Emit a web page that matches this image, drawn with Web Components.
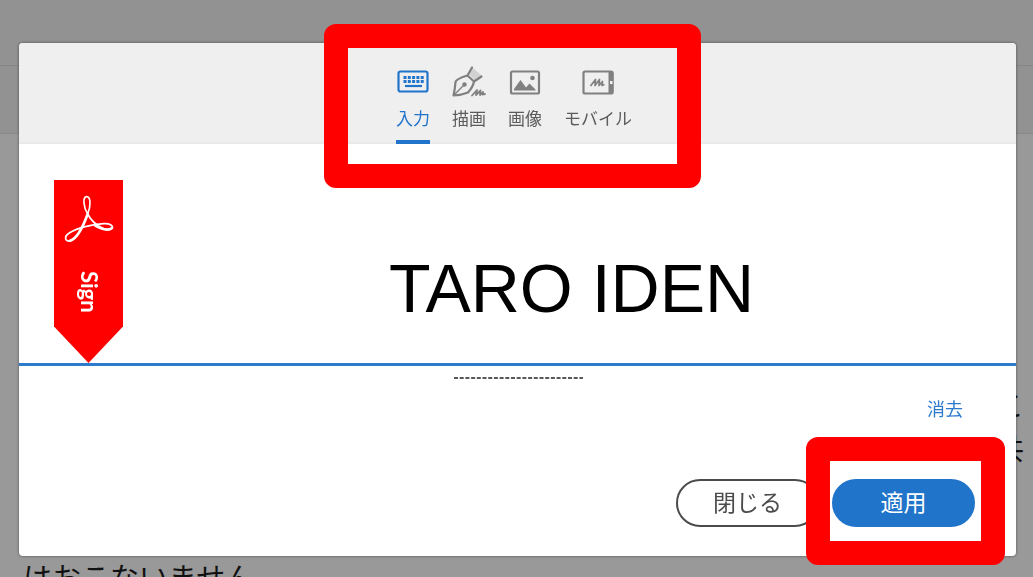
<!DOCTYPE html>
<html lang="ja">
<head>
<meta charset="utf-8">
<title>Adobe Sign</title>
<style>
body { margin: 0; height: 100vh; overflow: hidden; font-family: "Liberation Sans", "Noto Sans CJK JP", sans-serif; }
</style>
</head>
<body>
<document-page>
  <div slot="right">こ<br>共</div>
  <div slot="left">はおこないません</div>
</document-page>
<signature-dialog>
  <call-out slot="tabs" class="tabs">
    <tab-list>
      <signature-tab icon="keyboard" selected>入力</signature-tab>
      <signature-tab icon="pen">描画</signature-tab>
      <signature-tab icon="picture">画像</signature-tab>
      <signature-tab icon="mobile">モバイル</signature-tab>
    </tab-list>
  </call-out>
  <signature-field slot="field" value="TARO IDEN"></signature-field>
  <clear-link slot="clear">消去</clear-link>
  <pill-button slot="actions">閉じる</pill-button>
  <call-out slot="actions" class="apply"><pill-button primary>適用</pill-button></call-out>
</signature-dialog>
<script>
const define = (name, html, setup) => {
  const template = document.createElement('template');
  template.innerHTML = html;
  customElements.define(name, class extends HTMLElement {
    constructor() {
      super();
      this.attachShadow({ mode: 'open' }).append(template.content.cloneNode(true));
    }
    connectedCallback() { if (setup) setup(this, this.shadowRoot); }
  });
};

define('document-page', `
<style>
  :host { display: block; height: 100%; overflow: hidden; background: #999; color: #111;
    font: 29px/43px "Liberation Serif", "Noto Sans CJK JP", serif; }
  .top { height: 65px; background: #929292; }
  .bar { height: 67px; background: #929292; border-top: 1px solid #868686; border-bottom: 1px solid #888; }
  .text { padding: 252px 9px 0 23px; }
  .right { text-align: right; padding-bottom: 86px; }
</style>
<div class="top"></div><div class="bar"></div>
<div class="text"><div class="right"><slot name="right"></slot></div><slot name="left"></slot></div>`);

define('signature-dialog', `
<style>
  :host { position: fixed; inset: 0; display: flex; box-sizing: border-box; padding: 43px 17px 21px 19px; }
  section { flex: 1; display: flex; flex-direction: column; background: #fff; border-radius: 4px;
    box-shadow: 0 0 3px rgba(0,0,0,.5); }
  header { display: flex; justify-content: center; padding-right: 7px; background: #efefef;
    border-radius: 4px 4px 0 0; box-shadow: inset 0 -2px #e9e9e9; }
  .dashes { display: block; width: 131px; height: 2px; margin: 11px auto 0; }
  .clear { display: flex; justify-content: flex-end; padding: 19px 53px 0 0; }
  footer { display: flex; justify-content: flex-end; gap: 13px; margin-top: auto; padding: 0 41px 29px; }
</style>
<section role="dialog" aria-label="署名">
  <header><slot name="tabs"></slot></header>
  <slot name="field"></slot>
  <svg class="dashes" viewBox="0 0 131 2" aria-hidden="true"><path d="M2 1H131" stroke="#222" stroke-width="1.6" stroke-dasharray="4 1.7"/></svg>
  <div class="clear"><slot name="clear"></slot></div>
  <footer><slot name="actions"></slot></footer>
</section>`);

define('call-out', `
<style>
  :host { display: block; position: relative; }
  .frame { position: absolute; border: 24px solid #f00; border-radius: 12px; pointer-events: none; z-index: 1; }
  :host(.tabs) .frame { inset: -19px -69px -44px -72px; }
  :host(.apply) .frame { inset: -42px -30px -38px -26px; }
</style>
<slot></slot><div class="frame"></div>`);

define('tab-list', `
<style>:host { display: flex; gap: 22px; }</style><slot></slot>`,
host => host.setAttribute('role', 'tablist'));

const icons = {
  keyboard: `<rect x="2.5" y="5.5" width="29" height="20" rx="2" fill="none" stroke="currentColor" stroke-width="2.2"/>
    <path d="M7.500 11.500H28M7.500 15.500H28" stroke="currentColor" stroke-width="2.800" stroke-dasharray="3 1.300"/><path d="M9 20H26" stroke="currentColor" stroke-width="2.200"/>`,
  pen: `<path d="M20 1 30 10 23.500 15 16 7Z" fill="#d2d2d2"/>
    <g fill="none" stroke="currentColor" stroke-width="2.200" stroke-linecap="round" stroke-linejoin="round">
    <path d="M20 1.500 15.500 9.500Q4 13 3.500 16 3 23 1.500 29.500 10 29 16 26.500 21 21 22 15.500L29.500 10.500"/><path d="M15.500 9.500 22 15.500"/>
    <path d="M2 29 11 20" stroke-width="1.500"/><path d="M20 29.500 25 24 24 29 28.500 24.500 28 29 31 26 30.500 28.500 33 28" stroke-width="1.800"/></g>
    <circle cx="12.500" cy="18.500" r="2.200" fill="currentColor"/>`,
  picture: `<rect x="3" y="5.500" width="28" height="22" rx="1.500" fill="none" stroke="currentColor" stroke-width="2.200"/>
    <path d="M6 24.500V23L12.500 14 18 21.500 21.500 17.500 27.500 23.500V24.500Z" fill="currentColor"/><circle cx="24.500" cy="12" r="2.300" fill="currentColor"/>`,
  mobile: `<rect x="2.500" y="5.500" width="29" height="22" rx="1.500" fill="none" stroke="currentColor" stroke-width="2.200"/>
    <path d="M27.500 5H31Q32.500 5 32.500 7V26Q32.500 28 31 28H27.500Z" fill="currentColor"/><rect x="29" y="15" width="2.500" height="3" fill="#efefef"/>
    <path d="M9.500 20 14.500 13.500 14 19.500 18.500 13.500 18 19.500 21.500 15.500 21 19.500 23.500 18.500" fill="none" stroke="currentColor" stroke-width="1.700" stroke-linejoin="round"/>`
};
define('signature-tab', `
<style>
  :host { display: block; }
  button { display: flex; flex-direction: column; align-items: center; margin: 0; padding: 23px 0 8px;
    border: 0; border-bottom: 4px solid transparent; background: none; color: #808080; font-family: inherit; }
  svg { width: 34px; height: 32px; margin-bottom: 10px; }
  span { font-size: 17px; line-height: 24px; color: #5c5c5c; white-space: nowrap; }
  :host([selected]) button { color: #2074cb; border-color: #2074cb; }
  :host([selected]) span { color: #2074cb; }
</style>
<button type="button" role="tab"><svg viewBox="0 0 34 32" aria-hidden="true"></svg><span><slot></slot></span></button>`,
(host, root) => {
  root.querySelector('svg').innerHTML = icons[host.getAttribute('icon')];
  root.querySelector('button').setAttribute('aria-selected', host.hasAttribute('selected'));
});

define('sign-ribbon', `
<style>
  :host { display: flex; flex-direction: column; align-items: center; box-sizing: border-box; width: 69px; height: 183px;
    padding-top: 14px; background: #f00; color: #fff; clip-path: polygon(0 0, 100% 0, 100% 80%, 50% 100%, 0 80%); }
  svg { width: 50px; height: 50px; }
  span { writing-mode: vertical-rl; margin-top: 27px; font: 700 22px/28px Lato, sans-serif; }
</style>
<svg viewBox="101 87 150 150" fill="none" stroke="#fff" stroke-linecap="round" aria-hidden="true">
  <path d="M172 147C160 128 156 96 168 95C182 94 182 122 172 147C163 172 145 222 119 228C103 230 100 214 118 203C142 189 185 178 220 176C240 175 250 183 245 190C236 203 192 185 172 147" stroke-width="5"/>
  <path d="M172 147C163 172 145 220 119 227M195 182Q228 201 245 189" stroke-width="8"/>
</svg>
<span>Sign</span>`);

define('signature-field', `
<style>
  :host { display: flex; box-sizing: border-box; height: 222px; padding: 36px 0 0 35px; border-bottom: 3px solid #2c7bcd; }
  input { flex: 1; min-width: 0; align-self: flex-end; height: 150px; box-sizing: border-box; margin: 0 0 0 4px; padding: 0;
    border: 0; outline: 0; background: none; color: #000; text-align: center; font: 68px "Liberation Sans", Arial, sans-serif; }
</style>
<sign-ribbon></sign-ribbon><input type="text" aria-label="氏名">`,
(host, root) => { root.querySelector('input').value = host.getAttribute('value'); });

define('clear-link', `
<style>:host { display: block; } a { display: block; font-size: 18px; line-height: 24px; color: #2b7bce; text-decoration: none; }</style>
<a href="#"><slot></slot></a>`);

define('pill-button', `
<style>
  :host { display: block; }
  button { display: block; box-sizing: border-box; min-width: 143px; height: 48px; margin: 0; padding: 0 24px; border: 2px solid #4b4b4b;
    border-radius: 24px; background: #fff; color: #4b4b4b; font: 400 23px/32px "Liberation Sans", "Noto Sans CJK JP", sans-serif; }
  :host([primary]) button { background: #2074c9; border-color: #2074c9; color: #fff; }
</style>
<button type="button"><slot></slot></button>`);
</script>
</body>
</html>
